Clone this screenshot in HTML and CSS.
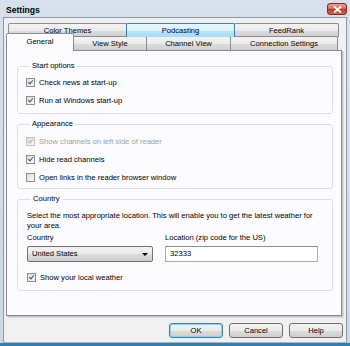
FILE: index.html
```html
<!DOCTYPE html>
<html lang="en">
<head>
    <meta charset="UTF-8">
    <title>Settings</title>
    <link rel="stylesheet" href="styles.css">
</head>
<body>

<div class="window">
    <div class="titlebar">
        <span class="title">Settings</span>
        <button class="close-btn">
            <svg width="9" height="7" viewBox="0 0 9 7"><path d="M1 0.5 L8 6.5 M8 0.5 L1 6.5" stroke="#fff" stroke-width="1.8"/></svg>
        </button>
    </div>

    <div class="client">
        <div class="tab-row back">
            <div class="tab" style="width: 119px">Color Themes</div>
            <div class="tab hover" style="width: 109px">Podcasting</div>
            <div class="tab" style="width: 105px">FeedRank</div>
        </div>
        <div class="tab-row front">
            <div class="tab selected" style="width: 68px">General</div>
            <div class="tab" style="width: 74px">View Style</div>
            <div class="tab" style="width: 85px">Channel View</div>
            <div class="tab" style="width: 108px">Connection Settings</div>
        </div>

        <div class="panel">
            <fieldset class="group start">
                <legend>Start options</legend>
                <label class="check-row"><span class="check on"></span>Check news at start-up</label>
                <label class="check-row"><span class="check on"></span>Run at Windows start-up</label>
            </fieldset>

            <fieldset class="group appearance">
                <legend>Appearance</legend>
                <label class="check-row disabled"><span class="check on"></span>Show channels on left side of reader</label>
                <label class="check-row"><span class="check on"></span>Hide read channels</label>
                <label class="check-row"><span class="check"></span>Open links in the reader browser window</label>
            </fieldset>

            <fieldset class="group country">
                <legend>Country</legend>
                <p class="hint">Select the most appropriate location. This will enable you to get the latest weather for your area.</p>
                <div class="fields">
                    <div class="field country-field">
                        <span class="field-label">Country</span>
                        <div class="select">United States<span class="arrow"></span></div>
                    </div>
                    <div class="field location-field">
                        <span class="field-label">Location (zip code for the US)</span>
                        <div class="textbox">32333</div>
                    </div>
                </div>
                <label class="check-row"><span class="check on"></span>Show your local weather</label>
            </fieldset>
        </div>

        <div class="buttons">
            <button class="btn default">OK</button>
            <button class="btn">Cancel</button>
            <button class="btn">Help</button>
        </div>
    </div>
</div>

</body>
</html>
```

FILE: styles.css
```css
body {
    margin: 0;
    background-color: #c9d7e6;
    font-family: 'Liberation Sans', Arial, sans-serif;
    font-size: 7.6px;
    color: #000;
}
.window {
    width: 350px;
    height: 346px;
    box-sizing: border-box;
    display: flex;
    flex-direction: column;
    padding: 0 3px 0 3px;
    background: linear-gradient(#d6e1ed, #cbd8e6);
    border-bottom: 3px solid #2f7fb0;
}
.titlebar {
    height: 17px;
    display: flex;
    align-items: center;
    justify-content: space-between;
    flex-shrink: 0;
}
.title {
    font-weight: bold;
    font-size: 8.6px;
    margin-left: 3px;
    margin-top: 2px;
}
.close-btn {
    width: 20px;
    height: 12px;
    margin-top: 1px;
    padding: 0;
    border: 1px solid #7b3024;
    border-radius: 3px;
    background: linear-gradient(#e8a393, #d3644c 50%, #c03a20 51%, #d2674d);
    display: flex;
    align-items: center;
    justify-content: center;
}
.client {
    flex: 1;
    background-color: #f0f0f0;
    border: 1px solid #8e9aaa;
    border-bottom-color: #a9b4c0;
    display: flex;
    flex-direction: column;
    padding: 5px 3px 4px 2px;
}
.tab-row {
    display: flex;
    align-items: flex-end;
}
.tab-row.back {
    margin-left: 2px;
    height: 13px;
}
.tab-row.front {
    height: 14px;
}
.tab {
    box-sizing: border-box;
    height: 14px;
    border: 1px solid #898c95;
    border-bottom: none;
    border-radius: 2px 2px 0 0;
    background: linear-gradient(#f3f3f3, #ebebeb 50%, #dddddd 51%, #cfcfcf);
    text-align: center;
    line-height: 13px;
    margin-right: -1px;
}
.tab-row.back .tab {
    height: 14px;
    margin-bottom: -1px;
}
.tab.hover {
    border-color: #3c7fb1;
    background: linear-gradient(#eaf6fd, #d9f0fc 50%, #bee6fd 51%, #a7d9f5);
    position: relative;
    z-index: 1;
}
.tab.selected {
    height: 18px;
    background: #fcfcfe;
    margin-bottom: -1px;
    position: relative;
    z-index: 2;
    line-height: 15px;
}
.panel {
    box-sizing: border-box;
    width: 336px;
    height: 266px;
    background-color: #fcfcfe;
    border: 1px solid #898c95;
    box-shadow: 1px 1px 0 #c3c3c3, 2px 2px 0 #dadada;
    padding: 10px 8px 0 10px;
}
.group {
    margin: 0 0 5px 0;
    padding: 0 8px 4px 8px;
    border: 1px solid #dcdfe3;
    border-radius: 3px;
    min-width: 0;
}
.group legend {
    padding: 0 2px;
    margin-left: 4px;
    line-height: 10px;
}
.group.start {
    padding-top: 2px;
}
.group.appearance {
    padding-top: 3px;
    padding-bottom: 2px;
}
.group.country {
    padding-top: 7px;
    padding-left: 9px;
    padding-bottom: 4px;
}
.check-row {
    display: flex;
    align-items: center;
    height: 18px;
    gap: 4px;
}
.check-row.disabled {
    color: #a0a0a0;
}
.check {
    box-sizing: border-box;
    width: 9px;
    height: 9px;
    border: 1px solid #8f8f8f;
    background: linear-gradient(135deg, #dcdcdc, #fbfbfb);
    position: relative;
}
.check.on::after {
    content: "";
    position: absolute;
    left: 2px;
    top: 0px;
    width: 2px;
    height: 4px;
    border: solid #3b4f8a;
    border-width: 0 1.5px 1.5px 0;
    transform: rotate(40deg);
}
.check-row.disabled .check {
    border-color: #c4c4c4;
}
.check-row.disabled .check.on::after {
    border-color: #b0b0b0;
}
.hint {
    margin: 0;
    line-height: 10px;
}
.fields {
    display: flex;
    gap: 12px;
    margin-top: 2px;
}
.field {
    display: flex;
    flex-direction: column;
    gap: 3px;
}
.field-label {
    line-height: 10px;
}
.select {
    box-sizing: border-box;
    width: 126px;
    height: 16px;
    border: 1px solid #707070;
    border-radius: 2px;
    background: linear-gradient(#f2f2f2, #ebebeb 50%, #dddddd 51%, #cfcfcf);
    line-height: 14px;
    padding-left: 4px;
    display: flex;
    justify-content: space-between;
    align-items: center;
}
.arrow {
    width: 0;
    height: 0;
    border-left: 3px solid transparent;
    border-right: 3px solid transparent;
    border-top: 3px solid #000;
    margin-right: 4px;
}
.textbox {
    box-sizing: border-box;
    width: 153px;
    height: 16px;
    border: 1px solid #abadb3;
    border-top-color: #8e8f8f;
    background: #fff;
    line-height: 14px;
    padding-left: 4px;
}
.country .check-row {
    margin-top: 6px;
}
.buttons {
    display: flex;
    justify-content: flex-end;
    gap: 6px;
    margin-top: 7px;
}
.btn {
    width: 54px;
    height: 15px;
    padding: 0;
    border: 1px solid #707070;
    border-radius: 3px;
    background: linear-gradient(#f2f2f2, #ebebeb 50%, #dddddd 51%, #cfcfcf);
    font-family: inherit;
    font-size: 7.6px;
    color: #000;
}
.btn.default {
    border-color: #3c7fb1;
    box-shadow: inset 0 0 0 1px #8fd3f2;
}
```
